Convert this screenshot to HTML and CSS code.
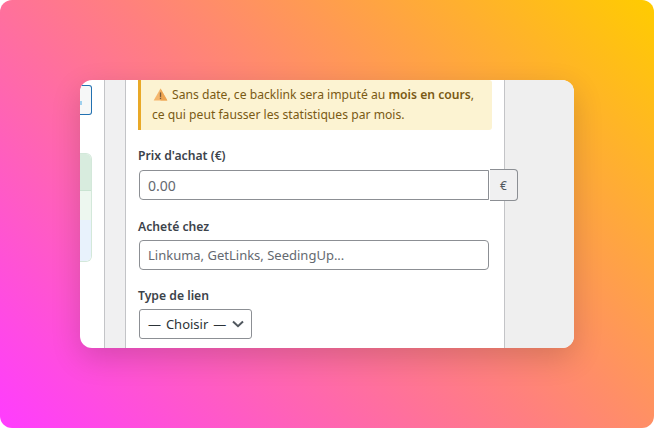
FILE: index.html
```html
<!DOCTYPE html>
<html lang="fr">
<head>
<meta charset="utf-8">
<title>Backlink</title>
<link rel="stylesheet" href="styles.css">
</head>
<body>
<div class="stage">
  <div class="window">
    <div class="left">
      <div class="top-btn"><span class="tick"></span></div>
      <div class="table">
        <div class="tr green"></div>
        <div class="tr pale"></div>
        <div class="tr blue"></div>
      </div>
    </div>
    <div class="gutter"></div>
    <div class="panel">
      <div class="notice">
        <p class="line"><svg class="warn" viewBox="0 0 16 16" width="15" height="15"><path d="M8 1.6 15.3 14.4H.7Z" fill="#f5b66c"/><path d="M8 1.6 15.3 14.4H8Z" fill="#eea552"/><rect x="7.3" y="5.8" width="1.4" height="4.8" fill="#7a5a3a"/><rect x="7.3" y="11.4" width="1.4" height="1.5" fill="#7a5a3a"/></svg>Sans date, ce backlink sera imputé au <b>mois en cours</b>,</p>
        <p class="line">ce qui peut fausser les statistiques par mois.</p>
      </div>
      <label class="lbl first">Prix d'achat (€)</label>
      <div class="group">
        <input class="field price" type="text" placeholder="0.00">
        <span class="addon">€</span>
      </div>
      <label class="lbl second">Acheté chez</label>
      <input class="field shop" type="text" placeholder="Linkuma, GetLinks, SeedingUp...">
      <label class="lbl third">Type de lien</label>
      <div class="select"><span>— Choisir —</span><svg viewBox="0 0 12 8" width="12" height="8"><path d="M1 1.5 6 6.2 11 1.5" fill="none" stroke="#50575e" stroke-width="2"/></svg></div>
    </div>
    <div class="side"></div>
  </div>
</div>
</body>
</html>
```
FILE: styles.css
```css
* { box-sizing: border-box; }
html, body { margin: 0; padding: 0; background: #fff; }
body { width: 654px; height: 428px; overflow: hidden; font-family: "Noto Sans", "Open Sans", sans-serif; }
.stage {
  width: 654px; height: 428px; border-radius: 12px; padding: 80px 80px;
  background: linear-gradient(45deg, #ff3cff 0%, #ff7f80 50%, #ffcc00 100%);
}
.window {
  width: 494px; height: 268px; background: #fff; border-radius: 12px; overflow: hidden;
  display: flex; box-shadow: 0 10px 30px rgba(0,0,0,.16);
}
.left { width: 24px; flex: none; padding-top: 5px; }
.top-btn { width: 12px; height: 30px; border: 1px solid #2271b1; border-left: 0; border-radius: 0 3px 3px 0; background: #f6f7f7; padding-top: 15px; }
.tick { display: block; width: 2px; height: 4px; background: #9fd0ee; }
.table { margin-top: 38px; width: 12px; height: 109px; border: 1px solid #d3e8da; border-left: 0; border-radius: 0 6px 6px 0; overflow: hidden; display: flex; flex-direction: column; }
.tr { flex: none; }
.green { height: 37px; background: #d8ecde; border-bottom: 1px solid #c9e3d1; }
.pale { height: 29px; background: #edf7ef; }
.blue { flex: 1; background: #e8f2fc; }
.gutter { width: 22px; flex: none; background: #f0f0f1; border-left: 1px solid #c3c4c7; border-right: 1px solid #c3c4c7; }
.panel { width: 379px; flex: none; padding: 0 0 0 12px; border-right: 1px solid #c3c4c7; color: #3c434a; }
.notice { width: 354px; height: 50px; background: #fcf3d2; border-left: 3px solid #e9a928; border-radius: 0 3px 3px 0; padding: 5px 0 0 11px; color: #7a5a14; font-size: 12.15px; line-height: 20px; }
.line { margin: 0; white-space: nowrap; }
.line b { font-weight: 600; }
.warn { vertical-align: -3px; margin-right: 4px; margin-left: 1px; }
.lbl { display: block; font-size: 12.2px; font-weight: 600; line-height: 16px; color: #3c434a; }
.first { margin-top: 18px; }
.second { margin-top: 18px; }
.third { margin-top: 18px; }
.group { position: relative; z-index: 1; display: flex; align-items: center; margin-top: 5px; height: 32px; }
.field { flex: none; height: 30px; border: 1px solid #8c8f94; border-radius: 4px; padding: 0 8px; font: 13px "Noto Sans", sans-serif; color: #2c3338; background: #fff; margin-left: 1px; display: block; outline: 0; }
.field::placeholder { color: #646970; opacity: 1; }
.price { width: 350px; border-radius: 4px 0 0 4px; font-size: 14px; }
.addon { flex: none; width: 28px; height: 32px; margin-left: 1px; border: 1px solid #8c8f94; border-left: 0; border-radius: 0 4px 4px 0; background: #f0f0f1; display: flex; align-items: center; justify-content: center; font-size: 12px; color: #50575e; }
.shop { width: 350px; margin-top: 5px; }
.select { margin: 5px 0 0 1px; width: 113px; height: 30px; border: 1px solid #8c8f94; border-radius: 3px; display: flex; align-items: center; justify-content: space-between; padding: 0 7px 0 8px; font-size: 13px; word-spacing: 1.5px; color: #2c3338; }
.side { flex: 1; background: #efefef; }
```
